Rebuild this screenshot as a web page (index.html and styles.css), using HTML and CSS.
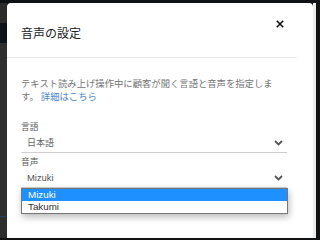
FILE: index.html
```html
<!DOCTYPE html>
<html lang="ja">
<head>
<meta charset="utf-8">
<link rel="stylesheet" href="styles.css">
</head>
<body>
<div class="screen">
  <div class="topbar"></div>
  <div class="main">
    <div class="leftrail">
      <div class="rail-a"></div>
      <div class="rail-b"></div>
      <div class="rail-c"></div>
      <div class="rail-line"></div>
      <div class="rail-d"></div>
    </div>
    <section class="dialog">
      <header class="dlg-head">
        <h1 class="dlg-title">音声の設定</h1>
        <button class="close" aria-label="閉じる">
          <svg width="8" height="8" viewBox="0 0 8 8"><path d="M0.8 0.8 L7.2 7.2 M7.2 0.8 L0.8 7.2" stroke="#111" stroke-width="1.6" fill="none"/></svg>
        </button>
      </header>
      <div class="dlg-body">
        <p class="desc">テキスト読み上げ操作中に顧客が聞く言語と音声を指定します。 <a class="link" href="#">詳細はこちら</a></p>
        <div class="field">
          <label class="field-label">言語</label>
          <div class="select">
            <span class="select-value jp">日本語</span>
            <svg class="chev" width="9" height="6" viewBox="0 0 9 6"><path d="M1 1 L4.5 4.5 L8 1" stroke="#555" stroke-width="1.8" fill="none"/></svg>
          </div>
        </div>
        <div class="field field-open">
          <label class="field-label">音声</label>
          <div class="select">
            <span class="select-value">Mizuki</span>
            <svg class="chev" width="9" height="6" viewBox="0 0 9 6"><path d="M1 1 L4.5 4.5 L8 1" stroke="#555" stroke-width="1.8" fill="none"/></svg>
          </div>
          <ul class="listbox">
            <li class="opt opt-sel">Mizuki</li>
            <li class="opt">Takumi</li>
          </ul>
        </div>
      </div>
    </section>
    <div class="rightrail"></div>
  </div>
</div>
</body>
</html>
```
FILE: styles.css
```css
* { box-sizing: border-box; }
html, body { margin: 0; padding: 0; }
body {
  width: 316px;
  height: 238px;
  overflow: hidden;
  background: #111214;
  font-family: "Noto Sans CJK JP", "Liberation Sans", sans-serif;
}
.screen { display: flex; flex-direction: column; height: 238px; }
.topbar { height: 3px; background: #101114; flex: none; }
.main { display: flex; flex: 1; background: #101114; }
.leftrail { width: 7px; flex: none; display: flex; flex-direction: column; }
.rail-a { height: 20px; background: #2b2b2b; }
.rail-b { height: 20px; background: #0e121a; }
.rail-c { height: 173px; background: #2e2e2e; }
.rail-line { height: 1px; background: #24406a; }
.rail-d { flex: 1; background: #2e2e2e; }
.rightrail { width: 3px; flex: none; background: #ececec; }

.dialog {
  width: 306px;
  flex: none;
  background: #fff;
  border-radius: 4px 4px 0 0;
  display: flex;
  flex-direction: column;
}
.dlg-head {
  height: 55px;
  margin-right: 16px;
  border-bottom: 1px solid #e6e6e6;
  display: flex;
  justify-content: space-between;
  align-items: flex-start;
  padding-left: 14px;
}
.dlg-title {
  margin: 22px 0 0;
  font-size: 12px;
  line-height: 16px;
  font-weight: normal;
  color: #202124;
}
.close {
  margin: 17px 13px 0 0;
  padding: 0;
  border: 0;
  background: none;
  width: 8px;
  height: 8px;
  display: flex;
}
.dlg-body { padding: 0 26px 0 14px; }
.desc {
  margin: 19px 0 0;
  font-size: 9.33px;
  line-height: 13px;
  color: #737373;
}
.link { color: #4a87c8; text-decoration: none; }
.field { position: relative; display: flex; flex-direction: column; }
.desc + .field { margin-top: 18px; }
.field + .field { margin-top: 3px; }
.field-label {
  font-size: 8.7px;
  line-height: 12px;
  color: #555;
}
.select {
  height: 20px;
  border-bottom: 1px solid #cfcfcf;
  display: flex;
  align-items: center;
  justify-content: space-between;
  padding: 0 4px 0 6px;
}
.select-value {
  font-family: "Liberation Sans", "Noto Sans CJK JP", sans-serif;
  font-size: 9.4px;
  color: #555;
}
.select-value.jp { font-family: "Noto Sans CJK JP", sans-serif; font-size: 9px; color: #666; }
.chev { display: block; }

.listbox {
  position: absolute;
  top: 100%;
  left: 0;
  width: 267px;
  margin: 0;
  padding: 0;
  list-style: none;
  background: #fff;
  border: 1px solid #767676;
  box-shadow: 1px 3px 7px rgba(0, 0, 0, 0.28);
}
.opt {
  height: 12px;
  line-height: 12px;
  padding-left: 6px;
  font-family: "Liberation Sans", sans-serif;
  font-size: 9.8px;
  color: #333;
}
.opt-sel { background: #1e90ff; color: #fff; }
```
